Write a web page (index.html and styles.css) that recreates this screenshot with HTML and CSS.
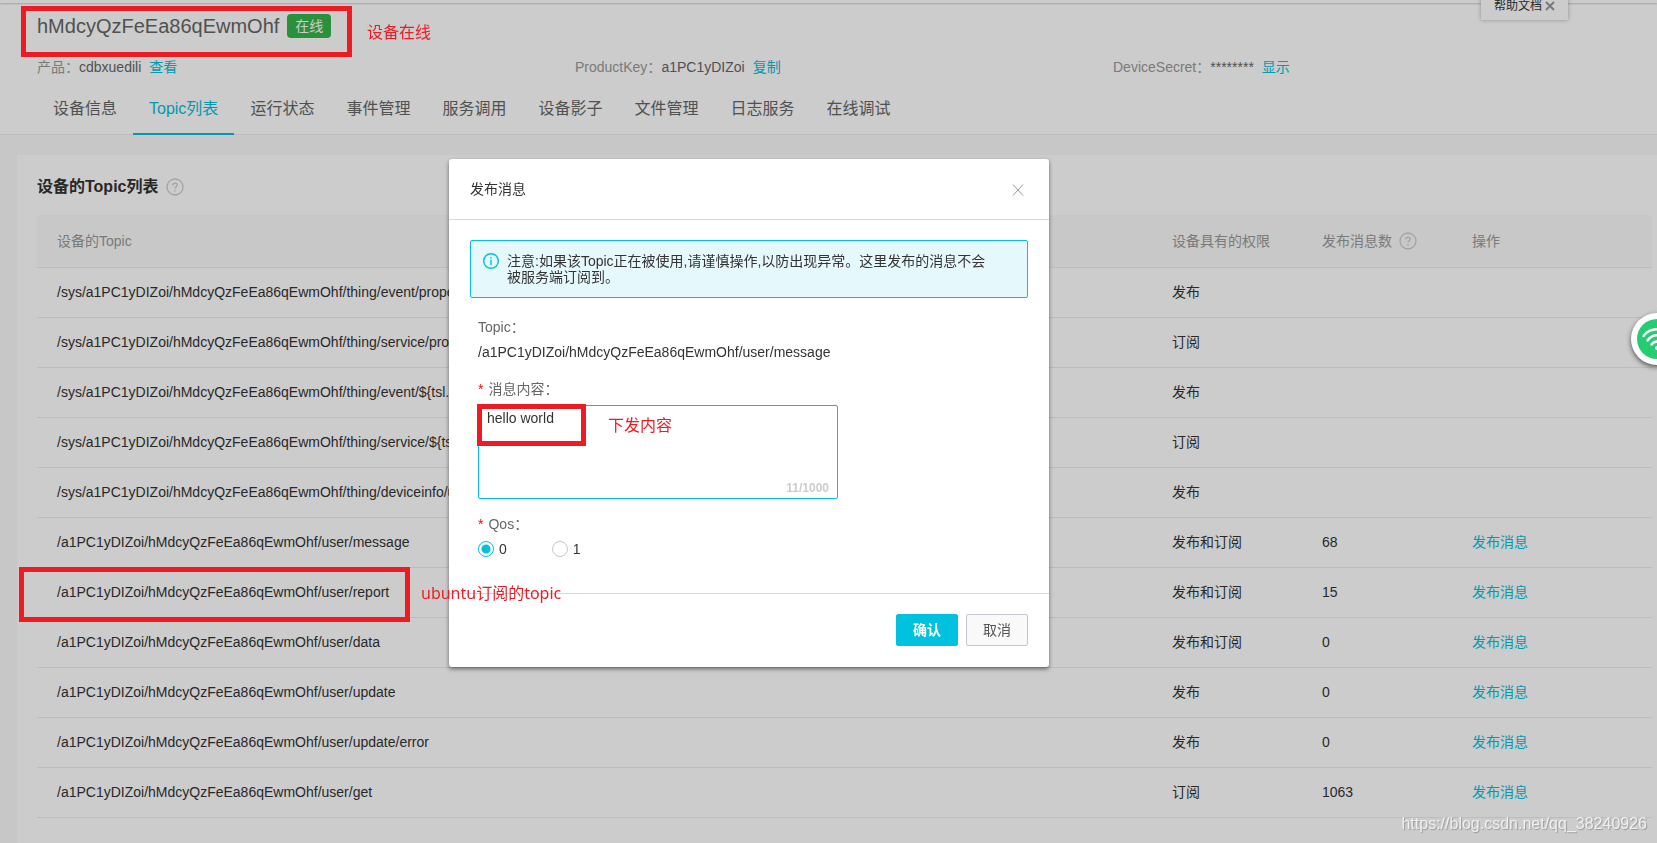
FILE: index.html
```html
<!DOCTYPE html>
<html lang="zh-CN">
<head>
<meta charset="utf-8">
<title>设备详情</title>
<link rel="stylesheet" href="styles.css">
</head>
<body>
<div class="page">
  <div class="topbar"></div>
  <header class="device-header">
    <div class="device-title">
      <h1 class="device-name">hMdcyQzFeEa86qEwmOhf</h1>
      <span class="status-badge">在线</span>
    </div>
    <dl class="device-meta">
      <div class="meta-item"><dt>产品：</dt><dd>cdbxuedili</dd><a class="link" href="#">查看</a></div>
      <div class="meta-item"><dt>ProductKey：</dt><dd>a1PC1yDIZoi</dd><a class="link" href="#">复制</a></div>
      <div class="meta-item"><dt>DeviceSecret：</dt><dd>********</dd><a class="link" href="#">显示</a></div>
    </dl>
    <nav class="tabs">
      <a class="tab" href="#">设备信息</a>
      <a class="tab tab-active" href="#">Topic列表</a>
      <a class="tab" href="#">运行状态</a>
      <a class="tab" href="#">事件管理</a>
      <a class="tab" href="#">服务调用</a>
      <a class="tab" href="#">设备影子</a>
      <a class="tab" href="#">文件管理</a>
      <a class="tab" href="#">日志服务</a>
      <a class="tab" href="#">在线调试</a>
    </nav>
  </header>

  <main class="card">
    <h2 class="card-title">设备的Topic列表
      <svg class="help-icon" viewBox="0 0 18 18"><circle cx="9" cy="9" r="8"/><path d="M6.8 7.2C6.8 4.3 11.2 4.4 11.2 7.1C11.2 8.8 9 8.8 9 10.6M9 12V13.4"/></svg>
    </h2>
    <table class="topics">
      <thead>
        <tr>
          <th>设备的Topic</th>
          <th class="col-perm">设备具有的权限</th>
          <th class="col-count"><span class="th-help">发布消息数
            <svg class="help-icon" viewBox="0 0 18 18"><circle cx="9" cy="9" r="8"/><path d="M6.8 7.2C6.8 4.3 11.2 4.4 11.2 7.1C11.2 8.8 9 8.8 9 10.6M9 12V13.4"/></svg></span></th>
          <th class="col-action">操作</th>
        </tr>
      </thead>
      <tbody>
        <tr><td>/sys/a1PC1yDIZoi/hMdcyQzFeEa86qEwmOhf/thing/event/property/post</td><td>发布</td><td></td><td></td></tr>
        <tr><td>/sys/a1PC1yDIZoi/hMdcyQzFeEa86qEwmOhf/thing/service/property/set</td><td>订阅</td><td></td><td></td></tr>
        <tr><td>/sys/a1PC1yDIZoi/hMdcyQzFeEa86qEwmOhf/thing/event/${tsl.event.identifer}/post</td><td>发布</td><td></td><td></td></tr>
        <tr><td>/sys/a1PC1yDIZoi/hMdcyQzFeEa86qEwmOhf/thing/service/${tsl.service.identifer}</td><td>订阅</td><td></td><td></td></tr>
        <tr><td>/sys/a1PC1yDIZoi/hMdcyQzFeEa86qEwmOhf/thing/deviceinfo/update</td><td>发布</td><td></td><td></td></tr>
        <tr><td>/a1PC1yDIZoi/hMdcyQzFeEa86qEwmOhf/user/message</td><td>发布和订阅</td><td>68</td><td><a class="link" href="#">发布消息</a></td></tr>
        <tr><td>/a1PC1yDIZoi/hMdcyQzFeEa86qEwmOhf/user/report</td><td>发布和订阅</td><td>15</td><td><a class="link" href="#">发布消息</a></td></tr>
        <tr><td>/a1PC1yDIZoi/hMdcyQzFeEa86qEwmOhf/user/data</td><td>发布和订阅</td><td>0</td><td><a class="link" href="#">发布消息</a></td></tr>
        <tr><td>/a1PC1yDIZoi/hMdcyQzFeEa86qEwmOhf/user/update</td><td>发布</td><td>0</td><td><a class="link" href="#">发布消息</a></td></tr>
        <tr><td>/a1PC1yDIZoi/hMdcyQzFeEa86qEwmOhf/user/update/error</td><td>发布</td><td>0</td><td><a class="link" href="#">发布消息</a></td></tr>
        <tr><td>/a1PC1yDIZoi/hMdcyQzFeEa86qEwmOhf/user/get</td><td>订阅</td><td>1063</td><td><a class="link" href="#">发布消息</a></td></tr>
      </tbody>
    </table>
  </main>

  <button class="help-doc" type="button">帮助文档
    <svg class="help-doc-close" viewBox="0 0 10 10"><path d="M1 1L9 9M9 1L1 9"/></svg>
  </button>
</div>

<div class="backdrop">
  <form class="dialog" role="dialog" aria-labelledby="dialog-title">
    <div class="dialog-head">
      <h2 class="dialog-title" id="dialog-title">发布消息</h2>
      <button class="dialog-close" type="button" aria-label="关闭"><svg viewBox="0 0 12 12"><path d="M1 0.5L11 11.5M11 0.5L1 11.5"/></svg></button>
    </div>
    <div class="dialog-body">
      <div class="notice">
        <svg class="notice-icon" viewBox="0 0 16 16"><circle cx="8" cy="8" r="7.3"/><path d="M8 4V5.6M8 6.8V12"/></svg>
        <p class="notice-text">注意:如果该Topic正在被使用,请谨慎操作,以防出现异常。这里发布的消息不会被服务端订阅到。</p>
      </div>
      <div class="fields">
        <div class="field field-topic">
          <span class="label">Topic：</span>
          <span class="value">/a1PC1yDIZoi/hMdcyQzFeEa86qEwmOhf/user/message</span>
        </div>
        <div class="field field-message">
          <label class="label" for="message"><span class="required">*</span>消息内容：</label>
          <div class="message-box">
            <textarea class="message" id="message">hello world</textarea>
            <span class="counter">11/1000</span>
            <span class="mark mark-message"></span>
            <span class="note note-message">下发内容</span>
          </div>
        </div>
        <div class="field" role="radiogroup" aria-label="Qos">
          <span class="label"><span class="required">*</span>Qos：</span>
          <div class="radios">
            <label class="radio"><input type="radio" name="qos" checked>0</label>
            <label class="radio"><input type="radio" name="qos">1</label>
          </div>
        </div>
      </div>
    </div>
    <div class="dialog-foot">
      <button class="btn btn-primary" type="button">确认</button>
      <button class="btn" type="button">取消</button>
    </div>
  </form>
</div>

<span class="mark mark-device"></span>
<span class="note note-device">设备在线</span>
<span class="mark mark-report"></span>
<span class="note note-report">ubuntu订阅的topic</span>

<div class="wifi">
  <svg viewBox="0 0 52 52"><circle cx="26" cy="26" r="20" fill="#26cc72"/><g fill="none" stroke="#fff" stroke-width="2.400" stroke-linecap="round"><path d="M12.500 23C19 14 33 14 39.500 23M16.500 27.500C21.500 20.500 30.500 20.500 35.500 27.500M20.500 31.500C23.500 27.500 28.500 27.500 31.500 31.500"/></g><circle cx="26" cy="35" r="2" fill="#fff"/></svg>
</div>
<span class="watermark">https://blog.csdn.net/qq_38240926</span>
</body>
</html>
```
FILE: styles.css
```css
* {
  box-sizing: border-box;
}

body {
  margin: 0;
  height: 100vh;
  overflow: hidden;
  background: #f9f9f9;
  color: #333;
  font: 14px/20px "Liberation Sans", "Noto Sans CJK SC", sans-serif;
}

h1, h2, p, dl, dd {
  margin: 0;
}

a {
  text-decoration: none;
}

button, textarea {
  font: inherit;
}

.link {
  color: #00c1de;
}

/* Device header */

.topbar {
  position: relative;
  height: 3px;
  background: #fff;
  box-shadow: 0 1px 2px rgba(0, 0, 0, 0.2);
}

.device-header {
  padding: 9px 37px 0;
  background: #fff;
  border-bottom: 1px solid #ebebeb;
}

.device-title {
  display: flex;
  align-items: center;
  gap: 8px;
}

.device-name {
  color: #666;
  font-size: 20px;
  font-weight: 400;
  line-height: 28px;
}

.status-badge {
  padding: 0 8px;
  border-radius: 4px;
  background: #36b44a;
  color: #fff;
  line-height: 24px;
}

.device-meta {
  display: grid;
  grid-template-columns: 1fr 1fr 1fr;
  margin: 17px -31px 0 0;
}

.meta-item {
  display: flex;
}

.meta-item dt {
  color: #999;
}

.meta-item dd {
  margin-right: 8px;
  color: #666;
}

.tabs {
  display: flex;
  margin: 4px 0 -1px;
}

.tab {
  padding: 16px 16px 12px;
  border-bottom: 2px solid transparent;
  color: #666;
  font-size: 16px;
  line-height: 24px;
}

.tab-active {
  border-color: #00c1de;
  color: #00c1de;
}

/* Topic list */

.card {
  margin: 20px 0 0 17px;
  padding: 21px 5px 40px 20px;
  background: #fff;
}

.card-title {
  display: flex;
  align-items: center;
  gap: 8px;
  margin-bottom: 17px;
  font-size: 16px;
  font-weight: 700;
  line-height: 22px;
}

.help-icon {
  width: 18px;
  height: 18px;
  fill: none;
  stroke: #ccc;
  stroke-width: 1.3;
}

.topics {
  width: 100%;
  border-collapse: collapse;
  table-layout: fixed;
}

.topics th,
.topics td {
  height: 50px;
  padding: 0 20px;
  border-bottom: 1px solid #ebebeb;
  text-align: left;
  white-space: nowrap;
}

.topics th {
  height: 52px;
  background: #fafafa;
  color: #999;
  font-weight: 400;
}

.topics .col-perm,
.topics .col-count {
  width: 150px;
}

.topics .col-action {
  width: 200px;
}

.th-help {
  display: flex;
  align-items: center;
  gap: 7px;
}

.help-doc {
  position: absolute;
  top: -7px;
  right: 89px;
  display: flex;
  align-items: center;
  gap: 3px;
  padding: 3px 13px 4px;
  border: 0;
  background: #fff;
  box-shadow: 0 0 4px rgba(0, 0, 0, 0.3);
  color: #333;
  font-size: 12px;
}

.help-doc-close {
  width: 10px;
  height: 10px;
  stroke: #999;
  stroke-width: 2;
}

/* Dialog */

.backdrop {
  position: fixed;
  inset: 0;
  display: flex;
  align-items: flex-start;
  justify-content: center;
  padding: 159px 159px 0 0;
  background: rgba(0, 0, 0, 0.2);
}

.dialog {
  width: 600px;
  border-radius: 3px;
  background: #fff;
  box-shadow: 0 2px 4px rgba(0, 0, 0, 0.5);
}

.dialog-head {
  display: flex;
  align-items: center;
  justify-content: space-between;
  padding: 20px 25px 19px 21px;
  border-bottom: 1px solid #d8d8d8;
}

.dialog-title {
  font-size: 14px;
  font-weight: 400;
  line-height: 21px;
}

.dialog-close {
  display: flex;
  padding: 0;
  border: 0;
  background: none;
}

.dialog-close svg {
  width: 12px;
  height: 12px;
  stroke: #999;
}

.dialog-body {
  padding: 20px 21px 34px;
}

.notice {
  display: flex;
  gap: 8px;
  padding: 12px 32px 12px 12px;
  border: 1px solid #00c1de;
  border-radius: 2px;
  background: #e5f8fc;
}

.notice-icon {
  flex: none;
  width: 16px;
  height: 16px;
  fill: none;
  stroke: #00c1de;
  stroke-width: 1.4;
}

.notice-text {
  line-height: 16px;
}

.fields {
  display: flex;
  flex-direction: column;
  gap: 14px;
  margin: 18px 8px 0;
}

.field {
  display: flex;
  flex-direction: column;
  gap: 4px;
}

.field-topic {
  margin-bottom: 2px;
}

.field-message {
  gap: 5px;
}

.label {
  color: #666;
  line-height: 22px;
}

.required {
  margin-right: 5px;
  color: #f00;
}

.message-box {
  position: relative;
  width: 360px;
}

.message {
  display: block;
  width: 100%;
  height: 94px;
  padding: 4px 8px;
  border: 1px solid #00c1de;
  border-radius: 2px;
  outline: 0;
  color: #333;
  line-height: 16px;
  resize: none;
}

.counter {
  position: absolute;
  right: 9px;
  bottom: 1px;
  color: #ccc;
  font-size: 12px;
  font-weight: 700;
}

.radios {
  display: flex;
  gap: 45px;
}

.radio {
  display: flex;
  align-items: center;
  gap: 5px;
}

.radio input {
  width: 16px;
  height: 16px;
  margin: 0;
  border: 1px solid #c3c8d0;
  border-radius: 50%;
  appearance: none;
}

.radio input:checked {
  border-color: #00c1de;
  background: radial-gradient(circle, #00c1de 4px, #fff 5px);
}

.dialog-foot {
  display: flex;
  justify-content: flex-end;
  gap: 8px;
  padding: 20px 21px 21px;
  border-top: 1px solid #d8d8d8;
}

.btn {
  width: 62px;
  height: 32px;
  border: 1px solid #c3c8d0;
  border-radius: 2px;
  background: #f9f9f9;
  color: #555;
}

.btn-primary {
  border-color: #00c1de;
  background: #00c1de;
  color: #fff;
  font-weight: 700;
}

/* Annotations drawn over the screen */

.mark {
  position: absolute;
  border: 5px solid #ed1c24;
}

.note {
  position: absolute;
  color: #ed1c24;
  font: 16px/22px "Noto Sans", "Noto Sans CJK SC", sans-serif;
}

.mark-device {
  top: 6px;
  left: 21px;
  width: 331px;
  height: 51px;
}

.note-device {
  top: 21px;
  left: 367px;
}

.mark-report {
  top: 567px;
  left: 19px;
  width: 391px;
  height: 55px;
}

.note-report {
  top: 582px;
  left: 421px;
}

.mark-message {
  top: -1px;
  left: -1px;
  width: 109px;
  height: 42px;
}

.note-message {
  top: 9px;
  left: 130px;
}

.wifi {
  position: absolute;
  top: 313px;
  right: -26px;
  width: 52px;
  height: 52px;
  border-radius: 50%;
  background: #fff;
  box-shadow: 0 2px 5px rgba(0, 0, 0, 0.6);
}

.watermark {
  position: absolute;
  right: 10px;
  bottom: 9px;
  color: rgba(255, 255, 255, 0.75);
  font-family: "Liberation Sans", sans-serif;
  font-size: 16px;
  text-shadow: 1px 1px 1px rgba(0, 0, 0, 0.25);
}
```
